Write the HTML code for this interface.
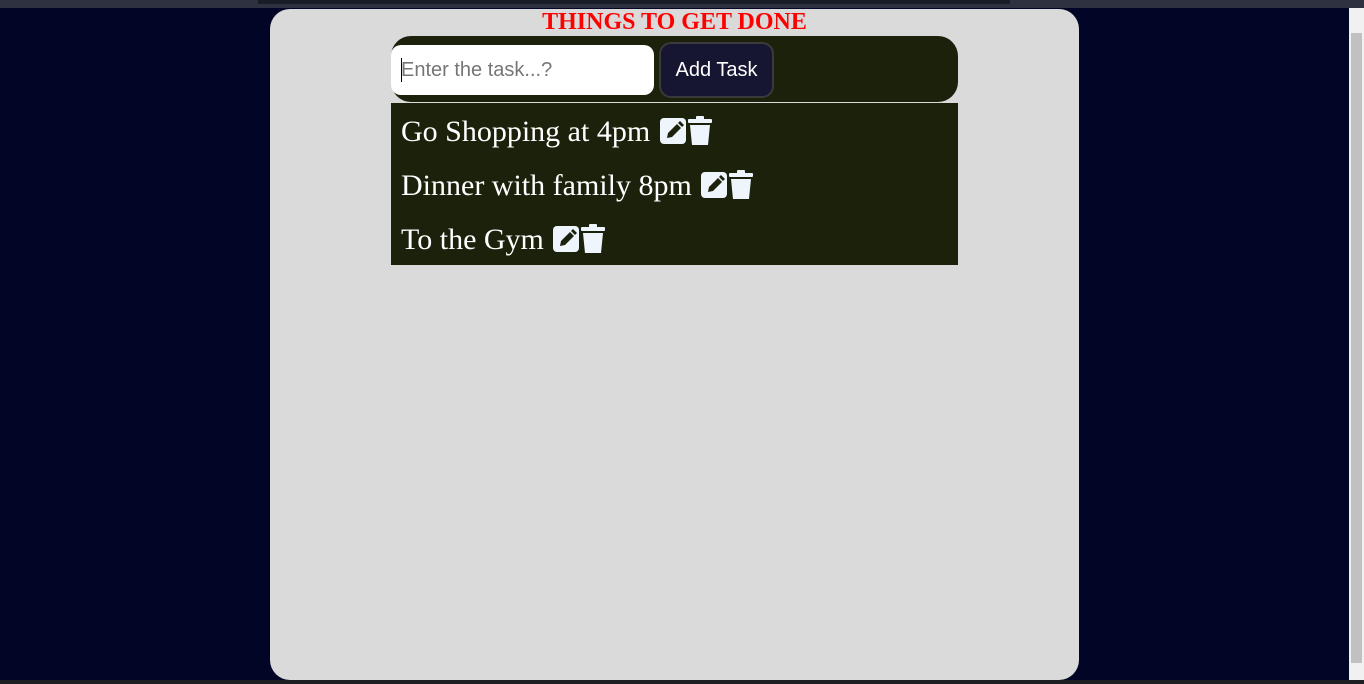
<!DOCTYPE html>
<html><head><meta charset="utf-8"><style>
html,body{margin:0;padding:0;width:1364px;height:684px;overflow:hidden;background:#030526;font-family:"Liberation Serif",serif;position:relative}
.top{position:absolute;left:0;top:0;width:1364px;height:8px;background:#2e313f}
.top2{position:absolute;left:258px;top:0;width:752px;height:4px;background:#1b1d26}
.bot{position:absolute;left:0;top:680px;width:1364px;height:4px;background:#1e1f22}
.sb{position:absolute;left:1349px;top:8px;width:15px;height:672px;background:#f1f1f1}
.sbt{position:absolute;left:1351px;top:33px;width:11px;height:630px;background:#c1c1c1}
.card{position:absolute;left:270px;top:9px;width:809px;height:671px;background:#dadada;border-radius:20px}
h1{position:absolute;left:0;width:809px;top:0;margin:0;text-align:center;color:#f00;font-size:24px;font-weight:bold;line-height:26px}
.head{position:absolute;left:121px;top:27px;width:567px;height:66px;background:#1c210c;border-radius:20px}
.inp{position:absolute;left:0;top:9px;width:263px;height:50px;background:#fff;border-radius:10px;font-family:"Liberation Sans",sans-serif;font-size:20px;color:#767676;line-height:50px;padding-left:10px;box-sizing:border-box}
.inp:before{content:"";position:absolute;left:10px;top:13px;width:1px;height:24px;background:#000}
.btn{position:absolute;left:268px;top:6px;width:115px;height:56px;box-sizing:border-box;background:#161632;border:2px solid #3a3a3a;border-radius:12px;color:#fff;font-family:"Liberation Sans",sans-serif;font-size:20px;text-align:center;line-height:52px}
.list{position:absolute;left:121px;top:94px;width:567px;height:162px;background:#1c210c}
.it{position:absolute;left:10px;color:#fff;font-size:30px;line-height:32px;white-space:nowrap}
.it svg{vertical-align:-5px;margin-left:2px}
</style></head><body>
<div class="top"></div><div class="top2"></div>
<div class="card">
<h1>THINGS TO GET DONE</h1>
<div class="head"><div class="inp">Enter the task...?</div><div class="btn">Add Task</div></div>
<div class="list">
<div class="it" style="top:13px">Go Shopping at 4pm <svg width="54" height="30" viewBox="0 0 54 30"><rect x="0" y="2" width="26" height="26" rx="4" fill="#eef5fd"/><path d="M7 22l1-5 9-9 4 4-9 9z" fill="#1c210c"/><path d="M18 7l2-2 4 4-2 2z" fill="#1c210c"/><rect x="28" y="3" width="24" height="4" rx="1" fill="#eef5fd"/><rect x="36" y="0" width="8" height="4" rx="1" fill="#eef5fd"/><path d="M30 9h20l-2 20h-16z" fill="#eef5fd"/></svg></div>
<div class="it" style="top:67px">Dinner with family 8pm <svg width="54" height="30" viewBox="0 0 54 30"><rect x="0" y="2" width="26" height="26" rx="4" fill="#eef5fd"/><path d="M7 22l1-5 9-9 4 4-9 9z" fill="#1c210c"/><path d="M18 7l2-2 4 4-2 2z" fill="#1c210c"/><rect x="28" y="3" width="24" height="4" rx="1" fill="#eef5fd"/><rect x="36" y="0" width="8" height="4" rx="1" fill="#eef5fd"/><path d="M30 9h20l-2 20h-16z" fill="#eef5fd"/></svg></div>
<div class="it" style="top:121px">To the Gym <svg width="54" height="30" viewBox="0 0 54 30"><rect x="0" y="2" width="26" height="26" rx="4" fill="#eef5fd"/><path d="M7 22l1-5 9-9 4 4-9 9z" fill="#1c210c"/><path d="M18 7l2-2 4 4-2 2z" fill="#1c210c"/><rect x="28" y="3" width="24" height="4" rx="1" fill="#eef5fd"/><rect x="36" y="0" width="8" height="4" rx="1" fill="#eef5fd"/><path d="M30 9h20l-2 20h-16z" fill="#eef5fd"/></svg></div>
</div>
</div>
<div class="sb"></div><div class="sbt"></div>
<div class="bot"></div>
</body></html>
